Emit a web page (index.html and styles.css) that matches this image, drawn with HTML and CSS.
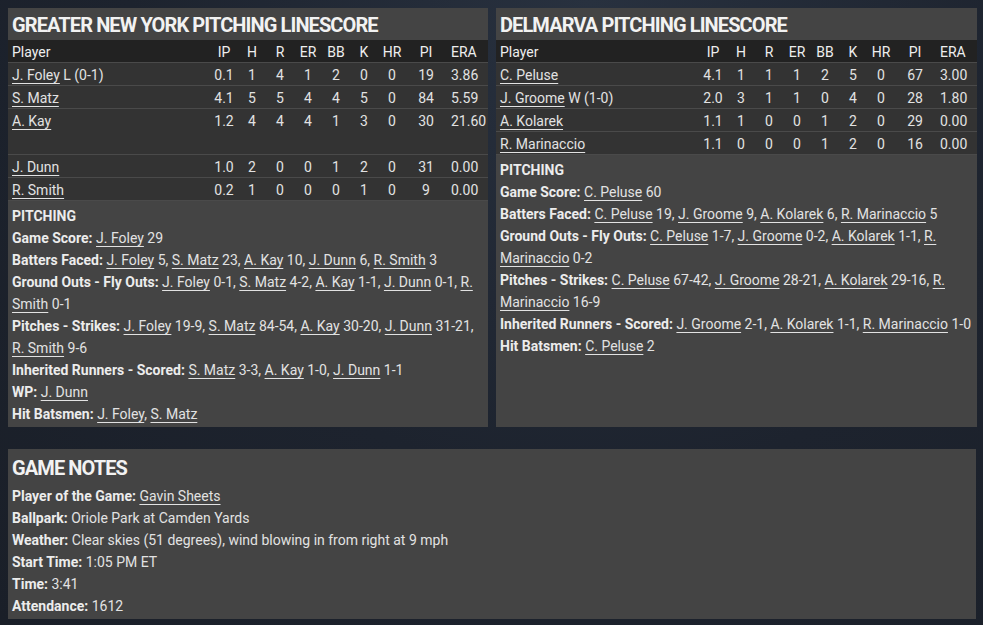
FILE: index.html
```html
<!DOCTYPE html>
<html lang="en">
<head>
  <meta charset="UTF-8">
  <meta name="viewport" content="width=device-width, initial-scale=1.0">
  <title>Box Score - Pitching</title>
  <link rel="stylesheet" href="styles.css">
</head>
<body>
  <div class="page">
    <div class="top">
      <section class="panel">
        <h2 class="panel-title">GREATER NEW YORK PITCHING LINESCORE</h2>
        <div class="linescore">
          <div class="ls-row ls-head">
            <span class="player">Player</span><span>IP</span><span>H</span><span>R</span><span>ER</span><span>BB</span><span>K</span><span>HR</span><span>PI</span><span class="era">ERA</span>
          </div>
          <div class="ls-row">
            <span class="player"><a href="#">J. Foley</a> L (0-1)</span><span>0.1</span><span>1</span><span>4</span><span>1</span><span>2</span><span>0</span><span>0</span><span>19</span><span class="era">3.86</span>
          </div>
          <div class="ls-row">
            <span class="player"><a href="#">S. Matz</a></span><span>4.1</span><span>5</span><span>5</span><span>4</span><span>4</span><span>5</span><span>0</span><span>84</span><span class="era">5.59</span>
          </div>
          <div class="ls-row ls-tall">
            <span class="player"><a href="#">A. Kay</a></span><span>1.2</span><span>4</span><span>4</span><span>4</span><span>1</span><span>3</span><span>0</span><span>30</span><span class="era">21.60</span>
          </div>
          <div class="ls-row">
            <span class="player"><a href="#">J. Dunn</a></span><span>1.0</span><span>2</span><span>0</span><span>0</span><span>1</span><span>2</span><span>0</span><span>31</span><span class="era">0.00</span>
          </div>
          <div class="ls-row">
            <span class="player"><a href="#">R. Smith</a></span><span>0.2</span><span>1</span><span>0</span><span>0</span><span>0</span><span>1</span><span>0</span><span>9</span><span class="era">0.00</span>
          </div>
        </div>
        <div class="notes">
          <p class="notes-head">PITCHING</p>
          <p><b>Game Score:</b> <a href="#">J. Foley</a> 29</p>
          <p><b>Batters Faced:</b> <a href="#">J. Foley</a> 5, <a href="#">S. Matz</a> 23, <a href="#">A. Kay</a> 10, <a href="#">J. Dunn</a> 6, <a href="#">R. Smith</a> 3</p>
          <p><b>Ground Outs - Fly Outs:</b> <a href="#">J. Foley</a> 0-1, <a href="#">S. Matz</a> 4-2, <a href="#">A. Kay</a> 1-1, <a href="#">J. Dunn</a> 0-1, <a href="#">R. Smith</a> 0-1</p>
          <p><b>Pitches - Strikes:</b> <a href="#">J. Foley</a> 19-9, <a href="#">S. Matz</a> 84-54, <a href="#">A. Kay</a> 30-20, <a href="#">J. Dunn</a> 31-21, <a href="#">R. Smith</a> 9-6</p>
          <p><b>Inherited Runners - Scored:</b> <a href="#">S. Matz</a> 3-3, <a href="#">A. Kay</a> 1-0, <a href="#">J. Dunn</a> 1-1</p>
          <p><b>WP:</b> <a href="#">J. Dunn</a></p>
          <p><b>Hit Batsmen:</b> <a href="#">J. Foley</a>, <a href="#">S. Matz</a></p>
        </div>
      </section>

      <section class="panel">
        <h2 class="panel-title">DELMARVA PITCHING LINESCORE</h2>
        <div class="linescore">
          <div class="ls-row ls-head">
            <span class="player">Player</span><span>IP</span><span>H</span><span>R</span><span>ER</span><span>BB</span><span>K</span><span>HR</span><span>PI</span><span class="era">ERA</span>
          </div>
          <div class="ls-row">
            <span class="player"><a href="#">C. Peluse</a></span><span>4.1</span><span>1</span><span>1</span><span>1</span><span>2</span><span>5</span><span>0</span><span>67</span><span class="era">3.00</span>
          </div>
          <div class="ls-row">
            <span class="player"><a href="#">J. Groome</a> W (1-0)</span><span>2.0</span><span>3</span><span>1</span><span>1</span><span>0</span><span>4</span><span>0</span><span>28</span><span class="era">1.80</span>
          </div>
          <div class="ls-row">
            <span class="player"><a href="#">A. Kolarek</a></span><span>1.1</span><span>1</span><span>0</span><span>0</span><span>1</span><span>2</span><span>0</span><span>29</span><span class="era">0.00</span>
          </div>
          <div class="ls-row">
            <span class="player"><a href="#">R. Marinaccio</a></span><span>1.1</span><span>0</span><span>0</span><span>0</span><span>1</span><span>2</span><span>0</span><span>16</span><span class="era">0.00</span>
          </div>
        </div>
        <div class="notes">
          <p class="notes-head">PITCHING</p>
          <p><b>Game Score:</b> <a href="#">C. Peluse</a> 60</p>
          <p><b>Batters Faced:</b> <a href="#">C. Peluse</a> 19, <a href="#">J. Groome</a> 9, <a href="#">A. Kolarek</a> 6, <a href="#">R. Marinaccio</a> 5</p>
          <p><b>Ground Outs - Fly Outs:</b> <a href="#">C. Peluse</a> 1-7, <a href="#">J. Groome</a> 0-2, <a href="#">A. Kolarek</a> 1-1, <a href="#">R. Marinaccio</a> 0-2</p>
          <p><b>Pitches - Strikes:</b> <a href="#">C. Peluse</a> 67-42, <a href="#">J. Groome</a> 28-21, <a href="#">A. Kolarek</a> 29-16, <a href="#">R. Marinaccio</a> 16-9</p>
          <p><b>Inherited Runners - Scored:</b> <a href="#">J. Groome</a> 2-1, <a href="#">A. Kolarek</a> 1-1, <a href="#">R. Marinaccio</a> 1-0</p>
          <p><b>Hit Batsmen:</b> <a href="#">C. Peluse</a> 2</p>
        </div>
      </section>
    </div>

    <section class="panel game-notes">
      <h2 class="panel-title">GAME NOTES</h2>
      <div class="notes">
        <p><b>Player of the Game:</b> <a href="#">Gavin Sheets</a></p>
        <p><b>Ballpark:</b> Oriole Park at Camden Yards</p>
        <p><b>Weather:</b> Clear skies (51 degrees), wind blowing in from right at 9 mph</p>
        <p><b>Start Time:</b> 1:05 PM ET</p>
        <p><b>Time:</b> 3:41</p>
        <p><b>Attendance:</b> 1612</p>
      </div>
    </section>
  </div>
</body>
</html>
```

FILE: styles.css
```css
body {
  margin: 0;
  font-family: Roboto, "Open Sans", sans-serif;
  font-size: 14px;
  color: #e2e2e2;
  background: #1e2430;
  background-image: radial-gradient(ellipse at 60% 0%, #28313f 0%, #1d232e 55%, #1a1f28 100%);
  min-height: 625px;
}
a {
  color: inherit;
  text-decoration: underline;
  text-underline-offset: 3px;
}
p {
  margin: 0;
}
.page {
  padding: 8px 7px 8px 8px;
}
.top {
  display: grid;
  grid-template-columns: 480px 481px;
  gap: 8px;
}
.panel {
  background-color: #444444;
  display: flex;
  flex-direction: column;
}
.panel-title {
  margin: 0;
  height: 32px;
  line-height: 35px;
  padding: 0 4px;
  font-size: 20px;
  font-weight: 700;
  letter-spacing: -0.9px;
  color: #f2f2f2;
}
.linescore {
  background-color: #333333;
}
.ls-row {
  display: grid;
  grid-template-columns: 1fr repeat(7, 28px) 40px 42px;
  height: 22px;
  align-items: center;
  border-bottom: 1px solid #4a4a4a;
}
.ls-row span {
  text-align: center;
  white-space: nowrap;
  padding-top: 2px;
}
.ls-row .player {
  text-align: left;
  padding-left: 4px;
}
.ls-row .era {
  text-align: left;
  padding-left: 5px;
}
.ls-head {
  background-color: #222222;
  color: #eeeeee;
}
.ls-tall {
  height: 45px;
  align-items: start;
  line-height: 21px;
}
.notes {
  padding: 4px 4px 2px;
  line-height: 22px;
}
.notes b,
.notes-head {
  font-weight: 700;
  color: #ececec;
}
.game-notes {
  margin-top: 22px;
  padding-top: 2px;
  height: 168px;
}
.game-notes .notes {
  padding-top: 2px;
}
```
